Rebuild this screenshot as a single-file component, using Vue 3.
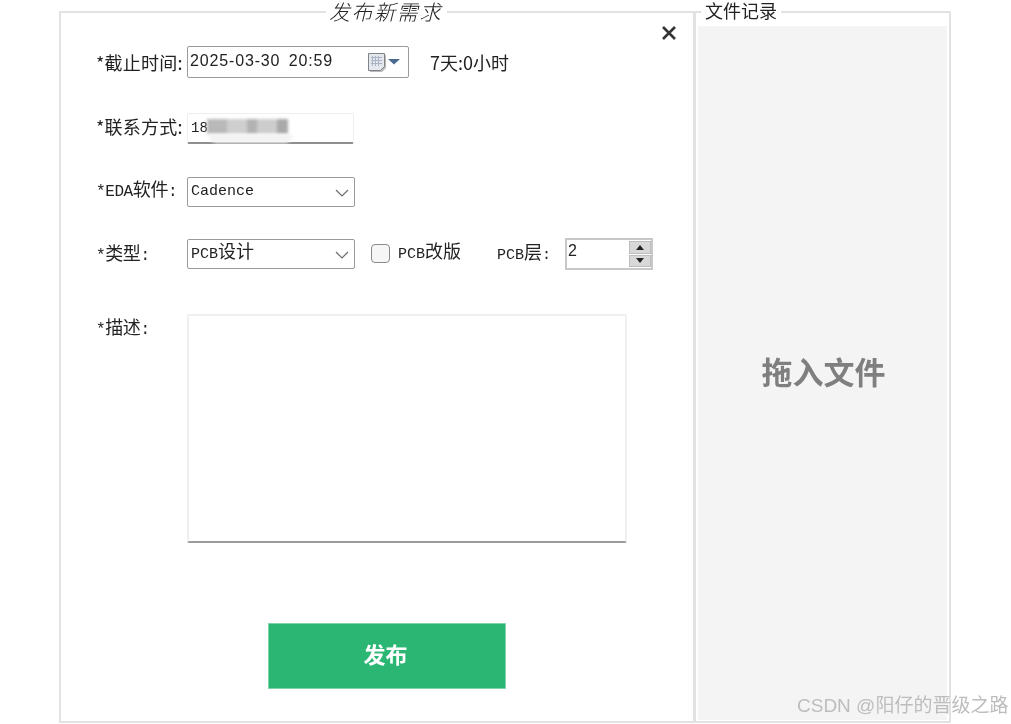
<script setup>
const softwareOptions = ['Cadence']
</script>

<template>
  <div class="page">
    <div class="dialog">
      <section class="panel form-panel">
        <h2 class="legend form-legend">发布新需求</h2>
        <button class="close" aria-label="关闭">
          <svg width="16" height="16" viewBox="0 0 16 16">
            <path d="M2 2 L14 14 M14 2 L2 14" stroke="#333" stroke-width="2.6" fill="none" />
          </svg>
        </button>

        <div class="row row-time">
          <label class="label">*截止时间:</label>
          <div class="control date">
            <span class="date-value">2025-03-30 20:59</span>
            <svg class="cal" width="34" height="22" viewBox="0 0 34 22">
              <path d="M3 4 H19 V17 L15 21 H3 Z" fill="#b9b9b9" />
              <path d="M1.5 2.5 H17.5 V15.5 L13.5 19.5 H1.5 Z" fill="#e4e8ee" stroke="#7f8287" />
              <path d="M4 6.5h11M4 9.5h11M4 12.5h11M5.5 5v10M8.5 5v10M11.5 5v10" stroke="#aab4c4" stroke-width="1" />
              <path d="M21 8 H33 L27 13.5 Z" fill="#4a6a94" />
            </svg>
          </div>
          <span class="remain">7天:0小时</span>
        </div>

        <div class="row row-contact">
          <label class="label contact-label">*联系方式:</label>
          <div class="control contact">
            <span class="contact-value">18</span>
            <span class="redact"><i class="a"></i><i class="b"></i><i class="c"></i><i class="d"></i><i class="e"></i></span>
            <span class="smear"></span>
          </div>
        </div>

        <div class="row row-eda">
          <label class="label mono eda-label">*EDA<em>软件</em>:</label>
          <div class="control select">
            <span class="select-value">{{ softwareOptions[0] }}</span>
            <svg class="chev" width="14" height="8" viewBox="0 0 14 8"><path d="M1 1 L7 7 L13 1" fill="none" stroke="#6b6b6b" stroke-width="1.2" /></svg>
          </div>
        </div>

        <div class="row row-type">
          <label class="label mono">*<em>类型</em>:</label>
          <div class="control select">
            <span class="select-value">PCB<em>设计</em></span>
            <svg class="chev" width="14" height="8" viewBox="0 0 14 8"><path d="M1 1 L7 7 L13 1" fill="none" stroke="#6b6b6b" stroke-width="1.2" /></svg>
          </div>
          <span class="check"></span>
          <span class="check-label">PCB<em>改版</em></span>
          <span class="layer-label">PCB<em>层</em>:</span>
          <div class="spin">
            <span class="spin-value">2</span>
            <div class="spin-btns">
              <span class="spin-btn"><b class="up"></b></span>
              <span class="spin-btn"><b class="down"></b></span>
            </div>
          </div>
        </div>

        <div class="row row-desc">
          <label class="label mono desc-label">*<em>描述</em>:</label>
          <div class="textarea"></div>
        </div>

        <div class="actions">
          <button class="publish"><span>发布</span></button>
        </div>
      </section>

      <section class="panel file-panel">
        <h2 class="legend file-legend">文件记录</h2>
        <div class="drop"><span>拖入文件</span></div>
      </section>
    </div>
    <div class="watermark">CSDN @阳仔的晋级之路</div>
  </div>
</template>

<style>
html, body { margin: 0; background: #fff; }
</style>

<style scoped>
.page {
  position: relative;
  width: 1011px;
  height: 724px;
  overflow: hidden;
  background: #fff;
  font-family: "Noto Sans CJK SC", "Liberation Sans", sans-serif;
  color: #222;
  filter: blur(0.45px);
}
em {
  font-style: normal;
  font-family: "Noto Sans CJK SC", sans-serif;
  font-size: 18px;
}
.dialog {
  display: flex;
  padding: 11px 0 0 59px;
}
.panel {
  position: relative;
  box-sizing: border-box;
  height: 712px;
  border: 2px solid #e2e2e2;
}
.form-panel {
  width: 636px;
  padding: 33px 0 0 35px;
}
.file-panel {
  width: 257px;
  margin-left: -1px;
  padding: 13px 2px 1px 2px;
}
.legend {
  position: absolute;
  top: -14px;
  margin: 0;
  padding: 0 4px;
  background: #fff;
  font-weight: 400;
  line-height: 24px;
  font-size: 18px;
  color: #222;
}
.form-legend {
  left: 265px;
  font-size: 21px;
  font-style: italic;
  font-family: "Noto Sans CJK JP", "Noto Sans CJK SC", sans-serif;
  font-weight: 300;
  letter-spacing: 1.6px;
  padding: 0 5px 0 3px;
}
.file-legend {
  left: 5px;
  top: -15px;
}
.close {
  position: absolute;
  top: 12px;
  left: 600px;
  padding: 0;
  border: 0;
  background: none;
  line-height: 0;
}
.row {
  display: flex;
  align-items: center;
}
.row-time { height: 32px; }
.row-contact { height: 31px; margin-top: 35px; }
.row-eda { height: 30px; margin-top: 33px; }
.row-type { height: 29px; margin-top: 32px; }
.row-desc { height: 229px; margin-top: 46px; align-items: flex-start; }
.label {
  width: 91px;
  flex: none;
  font-size: 18px;
  line-height: 20px;
  color: #222;
  white-space: nowrap;
  letter-spacing: 0.2px;
}
.mono {
  font-family: "Liberation Mono", "Noto Sans CJK SC", monospace;
  font-size: 16px;
  letter-spacing: -0.4px;
}
.contact-label { margin-top: -5px; }
.eda-label { margin-top: -4px; }
.desc-label { margin-top: 2px; }
.control {
  position: relative;
  box-sizing: border-box;
  display: flex;
  align-items: center;
  background: #fff;
  flex: none;
}
.date {
  width: 222px;
  height: 32px;
  border: 1px solid #9a9a9a;
  border-radius: 2px;
  padding-left: 2px;
}
.date-value {
  font-family: "Liberation Sans", sans-serif;
  font-size: 16px;
  letter-spacing: 0.85px;
  word-spacing: 3px;
  color: #222;
  white-space: nowrap;
  margin-top: -3px;
}
.cal {
  position: absolute;
  left: 179px;
  top: 4px;
}
.remain {
  margin-left: 21px;
  font-size: 18px;
  line-height: 20px;
  color: #222;
}
.contact {
  width: 167px;
  height: 31px;
  border: 1px solid #efefef;
  border-bottom: 2px solid #8f8f8f;
  border-radius: 2px;
  padding-left: 3px;
}
.contact-value {
  font-family: "Liberation Mono", monospace;
  font-size: 14px;
  color: #222;
}
.redact {
  display: flex;
  position: absolute;
  left: 19px;
  top: 5px;
  height: 15px;
  filter: blur(1.5px);
}
.redact i { display: block; height: 100%; }
.redact .a { width: 20px; background: #b9b9b9; }
.redact .b { width: 20px; background: #cfcfcf; }
.redact .c { width: 10px; background: #b2b2b2; }
.redact .d { width: 20px; background: #cdcdcd; }
.redact .e { width: 11px; background: #a9a9a9; }
.smear {
  position: absolute;
  left: 20px;
  top: 20px;
  width: 84px;
  height: 9px;
  background: #f3f3f3;
  border-radius: 0 0 30px 40px;
  filter: blur(1.5px);
}
.select {
  width: 168px;
  height: 30px;
  border: 1px solid #9a9a9a;
  border-radius: 2px;
  padding-left: 3px;
}
.select-value {
  font-family: "Liberation Mono", "Noto Sans CJK SC", monospace;
  font-size: 15px;
  line-height: 22px;
  color: #222;
  margin-top: 0;
  white-space: nowrap;
}
.row-type .select-value { margin-top: -2px; }
.chev {
  position: absolute;
  right: 5px;
  top: 11px;
}
.check {
  flex: none;
  box-sizing: border-box;
  width: 19px;
  height: 19px;
  margin-left: 16px;
  border: 1px solid #8a8a8a;
  border-radius: 4px;
  background: #f6f6f6;
}
.check-label {
  flex: none;
  width: 63px;
  margin-left: 8px;
  font-family: "Liberation Mono", "Noto Sans CJK SC", monospace;
  font-size: 15px;
  line-height: 22px;
  margin-top: -2px;
  white-space: nowrap;
}
.layer-label {
  margin-left: 36px;
  font-family: "Liberation Mono", "Noto Sans CJK SC", monospace;
  font-size: 15px;
  line-height: 22px;
  white-space: nowrap;
  width: 68px;
  flex: none;
}
.spin {
  box-sizing: border-box;
  flex: none;
  display: flex;
  justify-content: space-between;
  width: 88px;
  height: 32px;
  border: 2px solid #c8c8c8;
  background: #fff;
  padding: 1px 0 1px 1px;
  margin-top: 1px;
}
.spin-value {
  font-family: "Liberation Sans", sans-serif;
  font-size: 16px;
  line-height: 20px;
}
.spin-btns {
  display: flex;
  flex-direction: column;
  width: 22px;
  gap: 1px;
}
.spin-btn {
  flex: 1;
  display: flex;
  align-items: center;
  justify-content: center;
  background: #d8d8d8;
  border: 1px solid #bdbdbd;
  box-sizing: border-box;
}
.spin-btn b { width: 0; height: 0; border-left: 4px solid transparent; border-right: 4px solid transparent; }
.spin-btn .up { border-bottom: 5px solid #222; }
.spin-btn .down { border-top: 5px solid #222; }
.textarea {
  box-sizing: border-box;
  flex: none;
  width: 440px;
  height: 229px;
  border: 2px solid #f0f0f0;
  border-bottom: 2px solid #9b9b9b;
  border-radius: 2px;
  background: #fff;
}
.actions {
  margin-top: 80px;
  padding-left: 172px;
}
.publish {
  display: flex;
  align-items: center;
  justify-content: center;
  box-sizing: border-box;
  width: 238px;
  height: 66px;
  padding: 0 3px 7px 0;
  border: 1px solid #7fd3a8;
  background: #2bb673;
  color: #fff;
  font-family: "Noto Sans CJK SC", sans-serif;
  font-size: 22px;
  font-weight: 700;
}
.drop {
  display: flex;
  align-items: center;
  justify-content: center;
  box-sizing: border-box;
  height: 694px;
  padding: 0 0 5px 2px;
  background: #f4f4f4;
  color: #7f7f7f;
  font-size: 31px;
  font-weight: 700;
}
.watermark {
  position: absolute;
  left: 797px;
  top: 692px;
  font-family: "Liberation Sans", "Noto Sans CJK SC", sans-serif;
  font-size: 19px;
  line-height: 28px;
  color: #bdbdbd;
  white-space: nowrap;
}
</style>
